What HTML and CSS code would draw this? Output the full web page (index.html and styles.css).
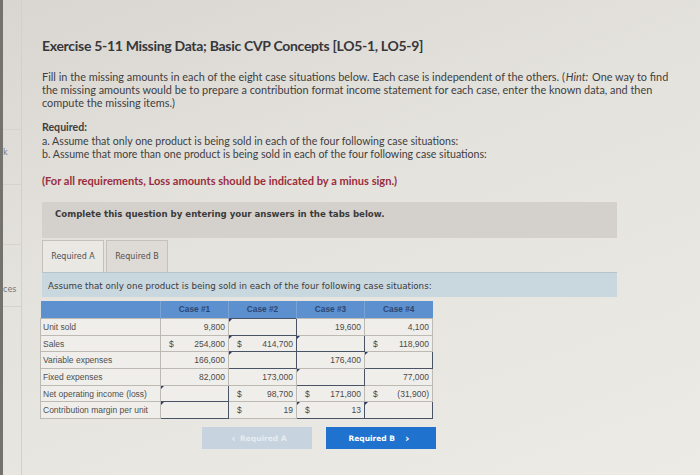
FILE: index.html
```html
<!DOCTYPE html>
<html>
<head>
<meta charset="utf-8">
<link rel="stylesheet" href="styles.css">
</head>
<body>
<div class="page">
  <aside class="side">
    <div class="edge"></div>
    <div class="side-col">
      <div class="side-box b1"></div>
      <div class="side-box b2"><span class="side-txt k">k</span></div>
      <div class="side-box b3"></div>
      <div class="side-box b4"><span class="side-txt">ces</span></div>
    </div>
  </aside>
  <main class="main">
    <h1 class="title">Exercise 5-11 Missing Data; Basic CVP Concepts [LO5-1, LO5-9]</h1>
    <p class="intro">Fill in the missing amounts in each of the eight case situations below. Each case is independent of the others. (<i>Hint:</i> One way to find<br>the missing amounts would be to prepare a contribution format income statement for each case, enter the known data, and then<br>compute the missing items.)</p>
    <div class="req">
      <div class="req-head">Required:</div>
      <div>a. Assume that only one product is being sold in each of the four following case situations:</div>
      <div>b. Assume that more than one product is being sold in each of the four following case situations:</div>
    </div>
    <p class="warn">(For all requirements, Loss amounts should be indicated by a minus sign.)</p>
    <div class="complete">Complete this question by entering your answers in the tabs below.</div>
    <div class="tabs">
      <div class="tab active">Required A</div>
      <div class="tab">Required B</div>
    </div>
    <div class="instr">Assume that only one product is being sold in each of the four following case situations:</div>
    <table class="grid">
      <colgroup><col class="c-label"><col class="c-case"><col class="c-case"><col class="c-case"><col class="c-case"></colgroup>
      <thead>
        <tr><th></th><th>Case #1</th><th>Case #2</th><th>Case #3</th><th>Case #4</th></tr>
      </thead>
      <tbody>
        <tr><td class="lbl">Unit sold</td><td><span class="v">9,800</span></td><td class="inp"></td><td><span class="v">19,600</span></td><td><span class="v">4,100</span></td></tr>
        <tr><td class="lbl">Sales</td><td><span class="d">$</span><span class="v">254,800</span></td><td class="inp"><span class="d">$</span><span class="v">414,700</span></td><td class="inp"></td><td><span class="d">$</span><span class="v">118,900</span></td></tr>
        <tr><td class="lbl">Variable expenses</td><td><span class="v">166,600</span></td><td class="inp"></td><td><span class="v">176,400</span></td><td class="inp"></td></tr>
        <tr><td class="lbl">Fixed expenses</td><td><span class="v">82,000</span></td><td><span class="v">173,000</span></td><td class="inp"></td><td><span class="v">77,000</span></td></tr>
        <tr><td class="lbl">Net operating income (loss)</td><td class="inp"></td><td><span class="d">$</span><span class="v">98,700</span></td><td><span class="d">$</span><span class="v">171,800</span></td><td><span class="d">$</span><span class="v">(31,900)</span></td></tr>
        <tr><td class="lbl">Contribution margin per unit</td><td class="inp"></td><td><span class="d">$</span><span class="v">19</span></td><td class="inp"><span class="d">$</span><span class="v">13</span></td><td class="inp"></td></tr>
      </tbody>
    </table>
    <div class="nav">
      <div class="btn prev"><span class="chev">&lsaquo;</span> Required A</div>
      <div class="btn next">Required B <span class="chev gap">&rsaquo;</span></div>
    </div>
  </main>
</div>
</body>
</html>
```
FILE: styles.css
```css
* { box-sizing: border-box; }
html, body { margin: 0; padding: 0; }
body {
  width: 700px;
  height: 475px;
  overflow: hidden;
  background: linear-gradient(160deg, #d9d6d1 0%, #e4e2dd 40%, #ecebe6 100%);
  font-family: Lato, "Open Sans", sans-serif;
  color: #3a3a3c;
}
.page { display: flex; height: 475px; }
.side { display: flex; width: 22px; flex: none; }
.edge { width: 3px; background: #74726d; }
.side-col {
  flex: 1;
  display: flex;
  flex-direction: column;
  border-right: 1px solid #d3d0ca;
}
.side-box { border-bottom: 1px solid #d6d3cd; position: relative; }
.b1 { height: 130px; }
.b2 { height: 55px; }
.b3 { height: 60px; }
.b4 { height: 62px; }
.side-txt {
  position: absolute;
  left: 0;
  font-size: 8px;
  color: #777;
  font-family: "DejaVu Sans", sans-serif;
}
.b2 .side-txt { top: 18px; }
.b4 .side-txt { top: 40px; }

.main { padding: 36px 0 0 20px; width: 650px; }
.title {
  margin: 0;
  font-size: 14px;
  line-height: 20px;
  font-weight: 700;
  color: #37373a;
  letter-spacing: -0.3px;
}
.intro {
  margin: 14px 0 0;
  font-size: 10.9px;
  line-height: 13px;
  width: 640px;
  color: #3e3e40;
}
.intro i { padding: 0 1px; }
.req {
  margin-top: 12px;
  font-size: 10.6px;
  line-height: 13.5px;
  color: #3e3e40;
}
.req-head { font-weight: 700; }
.warn {
  margin: 12px 0 0;
  font-size: 11.1px;
  line-height: 13px;
  font-weight: 700;
  color: #9a2d3e;
}
.complete {
  margin-top: 15px;
  width: 575px;
  height: 36px;
  padding: 6px 0 0 13px;
  background: #d4d1cc;
  font-family: "DejaVu Sans", sans-serif;
  font-weight: 700;
  font-size: 8.6px;
  line-height: 12px;
  color: #3a3a3a;
}
.tabs { display: flex; gap: 2px; margin-top: 2px; height: 32px; }
.tab {
  width: 62px;
  display: flex;
  align-items: center;
  justify-content: center;
  border: 1px solid #c4c1bc;
  border-bottom: none;
  background: #dedbd6;
  font-family: "DejaVu Sans", sans-serif;
  font-size: 8px;
  color: #505050;
}
.tab.active { background: #eae8e3; }
.instr {
  width: 575px;
  height: 25px;
  padding: 7px 0 0 6px;
  background: #c9d7df;
  border-top: 1px solid #b5c4cc;
  font-family: "DejaVu Sans", sans-serif;
  font-size: 8.7px;
  line-height: 12px;
  color: #3a3a3a;
}
.grid {
  margin-top: 4px;
  margin-left: -2px;
  border-collapse: collapse;
  table-layout: fixed;
  width: 392px;
  font-family: "Liberation Sans", Arial, sans-serif;
  font-size: 8.5px;
  color: #4a4a4a;
}
.c-label { width: 120px; }
.c-case { width: 68px; }
.grid th {
  height: 18px;
  background: #5c90cf;
  color: #2c4672;
  font-weight: 700;
  font-size: 8.3px;
  border-left: 1px solid #7aa4d6;
  padding: 0;
}
.grid th:first-child { border-left: none; }
.grid td {
  height: 16.7px;
  border: 1px solid #bdbab4;
  background: #f0eeea;
  padding: 0 3px;
  position: relative;
  text-align: right;
}
.grid td.lbl { text-align: left; padding-left: 2px; color: #4e4e4e; }
.grid td.inp { border: 1px solid #4a5266; background: #f0eeea; }
.grid td.inp::before {
  content: "";
  position: absolute;
  top: 0;
  left: 0;
  border-top: 3px solid #2b3d6e;
  border-right: 3px solid transparent;
}
.grid .d { float: left; padding-left: 5px; }
.nav { display: flex; gap: 14px; margin-top: 8px; padding-left: 160px; }
.btn {
  width: 110px;
  height: 22px;
  display: flex;
  align-items: center;
  justify-content: center;
  font-family: "DejaVu Sans", sans-serif;
  font-weight: 700;
  font-size: 7.5px;
  color: #fff;
}
.btn.prev { background: #c7d3de; color: #e6ecf1; }
.btn.next { background: #1f73cf; }
.chev { font-size: 11px; margin: 0 4px; line-height: 1; }
.chev.gap { margin-left: 10px; }
```
